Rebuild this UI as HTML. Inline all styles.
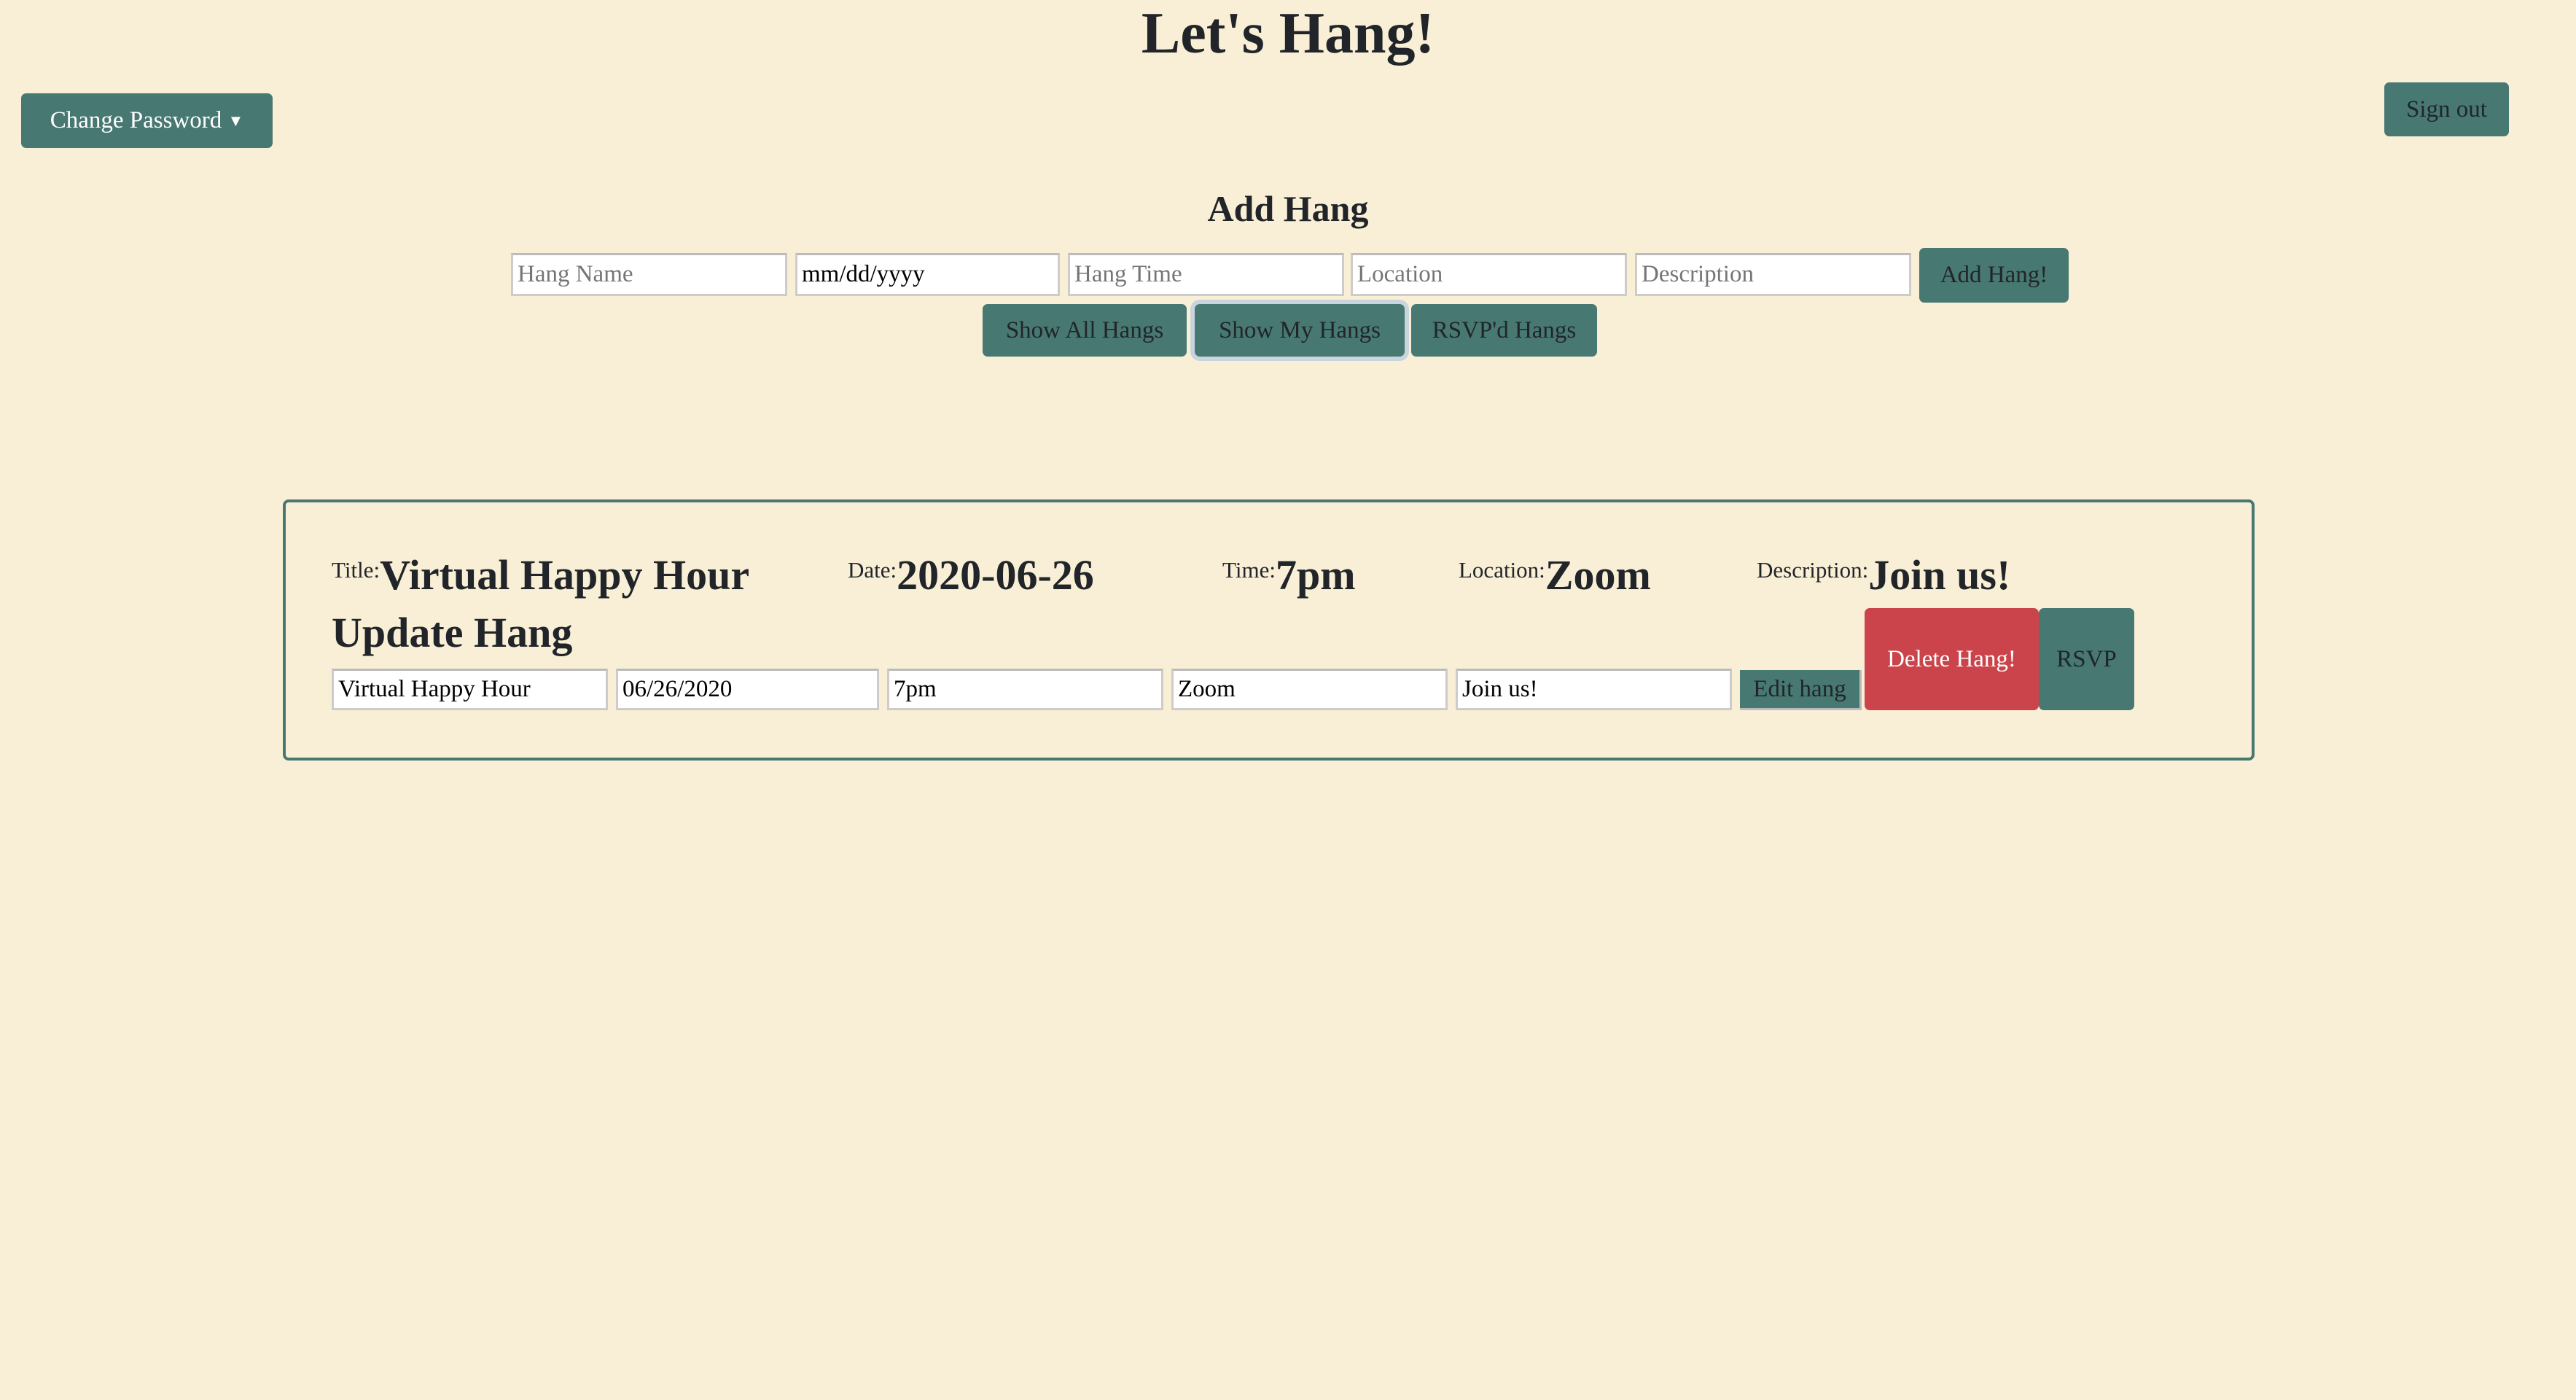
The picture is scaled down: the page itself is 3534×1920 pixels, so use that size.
<!DOCTYPE html>
<html><head><meta charset="utf-8"><style>
*{box-sizing:border-box;margin:0;padding:0}
body{width:3534px;height:1920px;background:#f9efd6;font-family:"Liberation Serif",serif;color:#212529;position:relative;overflow:hidden}
.a{position:absolute}
.btn{position:absolute;background:#477871;border-radius:7px;display:flex;align-items:center;justify-content:center;font-size:33px;color:#212529;white-space:nowrap}
.in{position:absolute;background:#fff;border:3px solid #ccc;border-top-color:#bbb;font-size:33px;display:flex;align-items:center;padding-left:6px;color:#000}
.ph{color:#757575}
.lab{font-size:31px;vertical-align:16px}
.val{font-size:58px;font-weight:bold}
</style></head><body>
<div class="a" style="left:0;width:3534px;top:0;text-align:center;font-size:80px;font-weight:bold;line-height:92px">Let's Hang!</div>
<div class="btn" style="left:29px;top:128px;width:345px;height:75px;color:#fff">Change Password&nbsp;<span style="font-size:22px">▼</span></div>
<div class="btn" style="left:3271px;top:113px;width:171px;height:74px">Sign out</div>
<div class="a" style="left:0;width:3534px;top:252px;text-align:center;font-size:50px;font-weight:bold;line-height:68px">Add Hang</div>
<div class="in ph" style="left:701px;top:347px;width:379px;height:59px">Hang Name</div>
<div class="in" style="left:1091px;top:347px;width:363px;height:59px">mm/dd/yyyy</div>
<div class="in ph" style="left:1465px;top:347px;width:379px;height:59px">Hang Time</div>
<div class="in ph" style="left:1853px;top:347px;width:379px;height:59px">Location</div>
<div class="in ph" style="left:2243px;top:347px;width:379px;height:59px">Description</div>
<div class="btn" style="left:2633px;top:340px;width:205px;height:75px">Add Hang!</div>
<div class="btn" style="left:1348px;top:417px;width:280px;height:72px">Show All Hangs</div>
<div class="btn" style="left:1639px;top:417px;width:288px;height:72px;box-shadow:0 0 0 6px #c8d4de">Show My Hangs</div>
<div class="btn" style="left:1936px;top:417px;width:255px;height:72px">RSVP'd Hangs</div>
<div class="a" style="left:388px;top:685px;width:2705px;height:358px;border:4px solid #477871;border-radius:8px"></div>
<div class="a" style="left:455px;top:742px;line-height:80px;white-space:nowrap"><span class="lab">Title:</span><span class="val">Virtual Happy Hour</span></div>
<div class="a" style="left:1163px;top:742px;line-height:80px;white-space:nowrap"><span class="lab">Date:</span><span class="val">2020-06-26</span></div>
<div class="a" style="left:1677px;top:742px;line-height:80px;white-space:nowrap"><span class="lab">Time:</span><span class="val">7pm</span></div>
<div class="a" style="left:2001px;top:742px;line-height:80px;white-space:nowrap"><span class="lab">Location:</span><span class="val">Zoom</span></div>
<div class="a" style="left:2410px;top:742px;line-height:80px;white-space:nowrap"><span class="lab">Description:</span><span class="val">Join us!</span></div>
<div class="a" style="left:455px;top:830px;font-size:58px;font-weight:bold;line-height:76px">Update Hang</div>
<div class="in" style="left:455px;top:917px;width:379px;height:57px">Virtual Happy Hour</div>
<div class="in" style="left:845px;top:917px;width:361px;height:57px">06/26/2020</div>
<div class="in" style="left:1217px;top:917px;width:379px;height:57px">7pm</div>
<div class="in" style="left:1607px;top:917px;width:379px;height:57px">Zoom</div>
<div class="in" style="left:1997px;top:917px;width:379px;height:57px">Join us!</div>
<div class="btn" style="left:2387px;top:919px;width:167px;height:55px;border-radius:0;border:3px solid #bbb;border-left:none;border-top:none">Edit hang</div>
<div class="btn" style="left:2558px;top:834px;width:239px;height:140px;background:#cc444b;color:#fff">Delete Hang!</div>
<div class="btn" style="left:2797px;top:834px;width:131px;height:140px">RSVP</div>
</body></html>
